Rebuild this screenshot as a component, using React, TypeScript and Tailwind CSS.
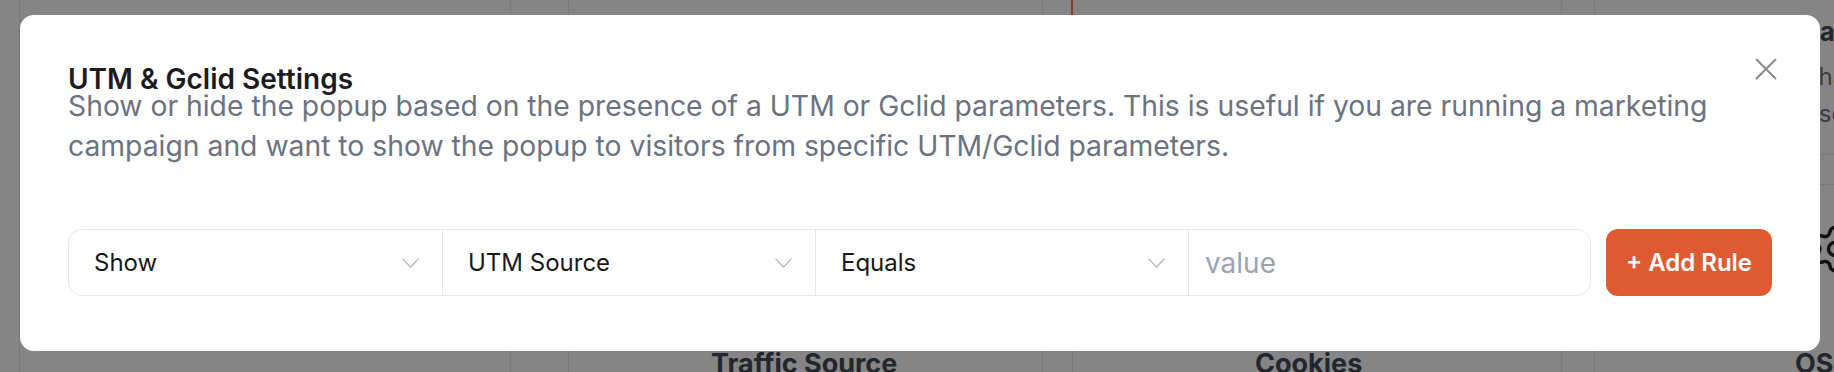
import { Settings } from "lucide-react"

const fields = [
  { label: "Show", width: "w-[374px]" },
  { label: "UTM Source", width: "w-[373px]" },
  { label: "Equals", width: "w-[373px]" },
]

function Chevron() {
  return (
    <svg width="17" height="10" viewBox="0 0 17 10" fill="none">
      <polyline points="0.6,0.6 8.5,9.2 16.4,0.6" stroke="#b5b5b5" strokeWidth="1.3" />
    </svg>
  )
}

function BottomLabel({ text, pad }: { text: string; pad: string }) {
  return (
    <div className={`mt-auto mb-[-10px] ${pad} whitespace-nowrap text-[27px] font-bold leading-[36px] text-[#23262c]`}>
      {text}
    </div>
  )
}

export default function App() {
  return (
    <div
      className="relative w-[1834px] h-[372px] overflow-hidden bg-[#858585]"
      style={{ fontFamily: "Inter, 'Noto Sans', sans-serif" }}
    >
      {/* page behind the backdrop */}
      <div className="absolute inset-0 flex">
        <div className="w-[19px]" />
        <div className="w-[491px] border-l border-[#7a7a7a]" />
        <div className="w-[58px] border-l border-[#7a7a7a]" />
        <div className="flex w-[474px] flex-col border-l border-[#7a7a7a]">
          <BottomLabel text="Traffic Source" pad="pl-[142px]" />
        </div>
        <div className="w-[30px] border-l border-[#7a7a7a]" />
        <div className="flex w-[489px] flex-col border-l border-[#7a7a7a]">
          <div className="-ml-[2px] h-[15px] w-[2px] bg-[#8a3a26]" />
          <BottomLabel text="Cookies" pad="pl-[182px]" />
        </div>
        <div className="w-[33px] border-l border-[#7a7a7a]" />
        <div className="flex flex-1 flex-col overflow-hidden border-l border-[#7a7a7a]">
          <div className="pl-[206px] pt-[16px] whitespace-nowrap">
            <div className="text-[26px] font-bold leading-[32px] text-[#23262c]">Data</div>
            <div className="mt-[10px] text-[24px] leading-[37px] text-[#3a3d42]">
              Chan
              <br />
              Use
            </div>
          </div>
          <div className="mt-[22px] h-[31px] border-y border-[#7a7a7a]" />
          <div className="pl-[214px] pt-[38px]">
            <Settings size={52} strokeWidth={1.6} color="#111" />
          </div>
          <BottomLabel text="OS" pad="pl-[200px]" />
        </div>
      </div>

      {/* dialog */}
      <div className="relative pt-[15px] pl-[20px]">
        <div className="relative w-[1800px] h-[336px] rounded-[14px] bg-white px-[48px] pt-[55px]">
          <button className="absolute top-[43px] right-[43px] w-[22px] h-[22px]">
            <svg width="22" height="22" viewBox="0 0 22 22" fill="none">
              <path d="M1 1L21 21M21 1L1 21" stroke="#8a8a8a" strokeWidth="2" />
            </svg>
          </button>

          <h2 className="text-[28px] font-semibold leading-[18px] text-[#1c1c1e]">UTM &amp; Gclid Settings</h2>
          <p className="mt-[-2px] text-[28.3px] leading-[40px] text-[#6b7280]">
            Show or hide the popup based on the presence of a UTM or Gclid parameters. This is useful if you are running a
            marketing campaign and want to show the popup to visitors from specific UTM/Gclid parameters.
          </p>

          <div className="mt-[63px] flex items-center">
            <div className="flex h-[67px] w-[1523px] rounded-[14px] border border-[#e5e7eb]">
              {fields.map((f) => (
                <div
                  key={f.label}
                  className={`${f.width} flex items-center justify-between border-r border-[#e5e7eb] pl-[25px] pr-[23px] text-[24px] text-[#18181b]`}
                >
                  <span>{f.label}</span>
                  <Chevron />
                </div>
              ))}
              <div className="flex flex-1 items-center pl-[16px] text-[28px] text-[#9ca3af]">value</div>
            </div>
            <button className="ml-[15px] h-[67px] w-[166px] rounded-[12px] bg-[#df5a30] text-[24px] font-semibold text-white">
              + Add Rule
            </button>
          </div>
        </div>
      </div>
    </div>
  )
}
